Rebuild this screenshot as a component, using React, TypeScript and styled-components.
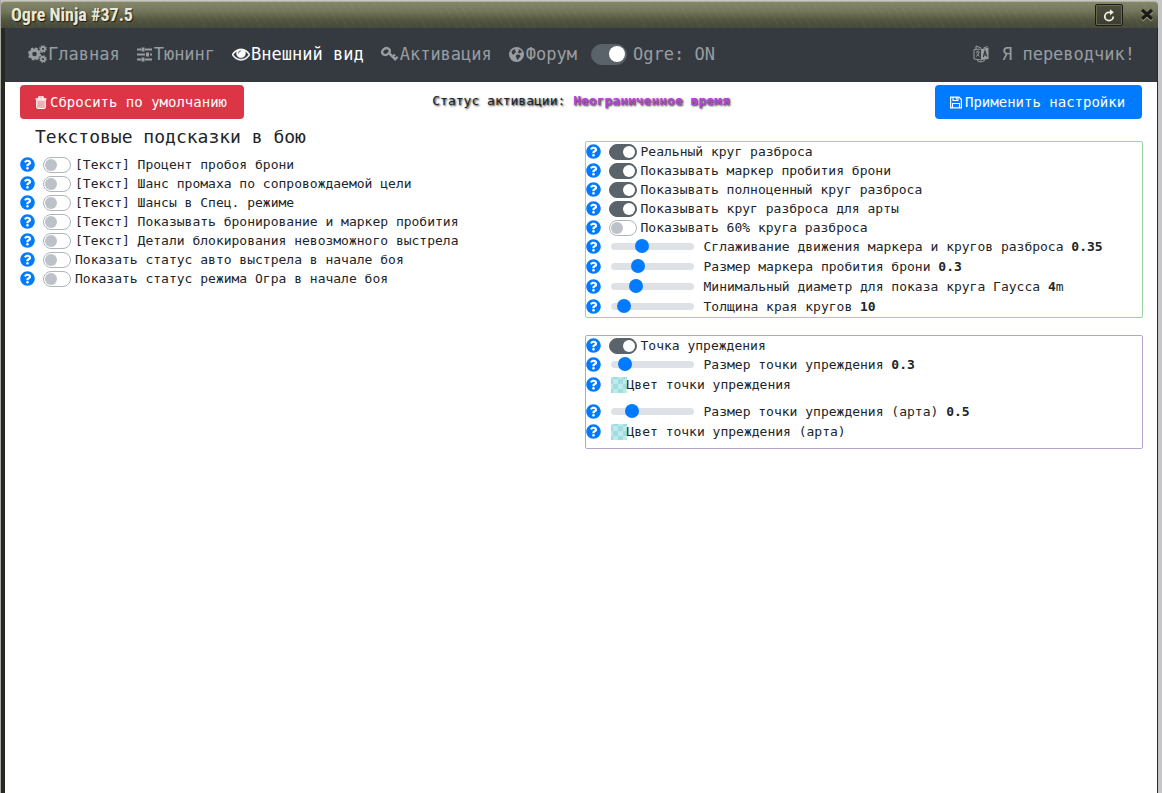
import React, { useState } from "react";
import styled, { createGlobalStyle } from "styled-components";
import { FaQuestionCircle } from "react-icons/fa";

const Global = createGlobalStyle`
  * { box-sizing: border-box; }
  body {
    margin: 0;
    background: #c6c6c8;
    color: #212529;
    font: 13px/19px "DejaVu Sans Mono", monospace;
  }
`;

const Frame = styled.div`
  display: flex;
  flex-direction: column;
  min-height: 100vh;
  margin-right: 4px;
  padding-top: 1px;
  border-left: 1px solid #a9aaa6;
`;

const TitleBar = styled.header`
  display: flex;
  align-items: center;
  gap: 16px;
  height: 27px;
  padding: 0 3px 0 10px;
  border-top: 1px solid #b0b294;
  border-radius: 4px 4px 0 0;
  background:
    repeating-linear-gradient(63deg, rgba(255, 255, 220, 0.03) 0 1px, transparent 1px 7px),
    linear-gradient(#84876a, #73765a 35%, #53553f 70%, #46483a);
`;

const Title = styled.h1`
  flex: 1;
  margin: 0;
  color: #e9e9d6;
  font: bold 18px/26px "Liberation Sans Narrow", "Roboto Condensed", sans-serif;
  text-shadow: 1px 1px 1px #1c1d14;
`;

const TitleButton = styled.button<{ $boxed?: boolean }>`
  display: grid;
  place-items: center;
  width: ${(p) => (p.$boxed ? 28 : 16)}px;
  height: 22px;
  padding: 0;
  border: ${(p) => (p.$boxed ? "1px solid #1b1c14" : "0")};
  border-radius: 2px;
  background: ${(p) => (p.$boxed ? "linear-gradient(#4c4e3c, #3b3c30)" : "none")};
  box-shadow: ${(p) => (p.$boxed ? "inset 0 0 0 1px #66684f" : "none")};
  color: #f1f1e2;
`;

const Body = styled.div`
  flex: 1;
  border-left: 4px solid #26291f;
  border-right: 1px solid #2a2b27;
  background: #fff;
`;

const NavBar = styled.nav`
  display: flex;
  align-items: center;
  gap: 17px;
  height: 54px;
  padding: 0 22px 2px 23px;
  background: #343a40;
  font-size: 17px;
  line-height: 24px;
`;

const NavLink = styled.a<{ $active?: boolean; $wide?: boolean }>`
  display: flex;
  align-items: center;
  gap: ${(p) => (p.$wide ? 12 : 1)}px;
  margin-left: ${(p) => (p.$wide ? "auto" : "0")};
  color: ${(p) => (p.$active ? "#fff" : "#999da0")};
  text-decoration: none;
  white-space: nowrap;
`;

const NavToggle = styled.label`
  display: flex;
  align-items: center;
  gap: 6px;
  margin-left: -3px;
  color: #999da0;
`;

const Switch = styled.input.attrs({ type: "checkbox", role: "switch" })<{ $large?: boolean }>`
  appearance: none;
  flex: none;
  display: flex;
  align-items: center;
  width: ${(p) => (p.$large ? 36 : 28)}px;
  height: ${(p) => (p.$large ? 21 : 16)}px;
  margin: 0;
  padding: 0 1px;
  border: 1px solid #adb5bd;
  border-radius: 12px;
  background: #fff;

  &::before {
    content: "";
    width: ${(p) => (p.$large ? 16 : 12)}px;
    height: ${(p) => (p.$large ? 16 : 12)}px;
    border-radius: 50%;
    background: #bcc2c8;
  }

  &:checked {
    justify-content: flex-end;
    border-color: #596369;
    background: #596369;
  }

  &:checked::before {
    background: #fff;
  }
`;

const Toolbar = styled.div`
  display: grid;
  grid-template-columns: 1fr auto 1fr;
  align-items: center;
  padding: 3px 15px 0;
`;

const ActionButton = styled.button<{ $tone: "danger" | "primary" }>`
  display: flex;
  align-items: center;
  justify-self: ${(p) => (p.$tone === "danger" ? "start" : "end")};
  gap: 3px;
  width: ${(p) => (p.$tone === "danger" ? 224 : 207)}px;
  height: 34px;
  padding: 0 0 0 15px;
  border: 0;
  border-radius: 4px;
  background: ${(p) => (p.$tone === "danger" ? "#dc3545" : "#007bff")};
  color: #fff;
  font: 14px/20px "DejaVu Sans Mono", monospace;
  white-space: nowrap;
`;

const Status = styled.p`
  margin: 0;
  padding-bottom: 4px;
  text-shadow: 1px 1px 2px #222;

  strong {
    color: #b840dc;
  }
`;

const Columns = styled.main`
  display: grid;
  grid-template-columns: 1fr 1fr;
  padding: 4px 14px 0 15px;
`;

const Heading = styled.h2`
  margin: 0 0 4px 15px;
  font-size: 18px;
  font-weight: 400;
  line-height: 28px;
`;

const Side = styled.div`
  display: flex;
  flex-direction: column;
  gap: 17px;
  padding: 18px 0 0 3px;
`;

const Panel = styled.section<{ $tone: "green" | "violet" }>`
  padding-bottom: ${(p) => (p.$tone === "green" ? 0 : 6)}px;
  border: 1px solid ${(p) => (p.$tone === "green" ? "#9ad69c" : "#b5a2cd")};
  border-radius: 2px;
`;

const Row = styled.div<{ $tall?: boolean; $spaced?: boolean }>`
  display: flex;
  align-items: center;
  height: ${(p) => (p.$tall ? 20 : 19)}px;
  margin-top: ${(p) => (p.$spaced ? 7 : 0)}px;
  padding-bottom: ${(p) => (p.$tall ? 1 : 0)}px;
  white-space: nowrap;
`;

const Hint = styled.button`
  display: flex;
  flex: none;
  width: 15px;
  margin-right: 8px;
  padding: 0;
  border: 0;
  background: none;
  color: #007bff;
`;

const Option = styled.label`
  display: flex;
  align-items: center;
  gap: 4px;
`;

const SliderOption = styled(Option)`
  gap: 10px;
  margin-left: 2px;
`;

const ColorOption = styled(Option)`
  gap: 0;
  margin-left: 2px;
`;

const Range = styled.input.attrs({ type: "range" })`
  appearance: none;
  width: 83px;
  height: 14px;
  margin: 0;
  background: none;

  &::-webkit-slider-runnable-track {
    height: 7px;
    border-radius: 4px;
    background: #dee2e6;
  }

  &::-webkit-slider-thumb {
    appearance: none;
    width: 14px;
    height: 14px;
    margin-top: -4px;
    border-radius: 50%;
    background: #007bff;
  }
`;

const Swatch = styled.button`
  width: 16px;
  height: 16px;
  padding: 0;
  border: 0;
  background: repeating-conic-gradient(#a3dcdf 0 25%, #bbebed 0 50%) 2px 2px / 10px 10px;
`;

function Icon({ w, h = w, box, children }: { w: number; h?: number; box: string; children: React.ReactNode }) {
  return (
    <svg width={w} height={h} viewBox={box} fill="none" stroke="currentColor" aria-hidden="true">
      {children}
    </svg>
  );
}

const GearsIcon = () => (
  <Icon w={19} h={18} box="0 0 19 18">
    <circle cx="6.500" cy="9" r="3.900" strokeWidth="3.200" />
    <circle cx="6.500" cy="9" r="5.700" strokeWidth="1.700" strokeDasharray="2.500 1.977" />
    <circle cx="15" cy="4" r="2" strokeWidth="1.800" />
    <circle cx="15" cy="4" r="3.200" strokeWidth="1.300" strokeDasharray="1.400 1.113" />
    <circle cx="15" cy="14" r="2" strokeWidth="1.800" />
    <circle cx="15" cy="14" r="3.200" strokeWidth="1.300" strokeDasharray="1.400 1.113" />
  </Icon>
);

const SlidersIcon = () => (
  <Icon w={16} h={15} box="0 0 16 15">
    <path d="M0 2.500h4M8 2.500h7M0 7.500h8M13 7.500h2M0 12.500h4M8 12.500h7" strokeWidth="1.800" />
    <path d="M6 .5v4M10.500 5.500v4M6 10.500v4" strokeWidth="3" />
  </Icon>
);

const EyeIcon = () => (
  <Icon w={18} box="0 0 1792 1792">
    <path
      fill="currentColor"
      strokeWidth="40"
      d="M1664 960q-152-236-381-353 61 104 61 225 0 185-131.500 316.500t-316.500 131.500-316.500-131.500-131.500-316.500q0-121 61-225-229 117-381 353 133 205 333.500 326.500t434.500 121.500 434.500-121.500 333.500-326.500zm-720-384q0-20-14-34t-34-14q-125 0-214.500 89.500t-89.500 214.500q0 20 14 34t34 14 34-14 14-34q0-86 61-147t147-61q20 0 34-14t14-34zm848 384q0 34-20 69-140 230-376.500 368.500t-499.500 138.500-499.500-139-376.500-368q-20-35-20-69t20-69q140-229 376.500-368t499.500-139 499.500 139 376.500 368q20 35 20 69z"
    />
  </Icon>
);

const KeyIcon = () => (
  <Icon w={18} h={16} box="0 0 18 16">
    <ellipse cx="5" cy="5.500" rx="4" ry="3.200" transform="rotate(-30 5 5.500)" strokeWidth="2.500" />
    <path d="M8 7.200L15 14" strokeWidth="2.500" />
    <path d="M11.500 11l2.500-2.500M14 13.500l2.700-2.700" strokeWidth="2.200" />
  </Icon>
);

const GlobeIcon = () => (
  <Icon w={16} h={15} box="0 0 16 15">
    <circle cx="7.500" cy="7.500" r="7.500" fill="currentColor" stroke="none" />
    <path
      fill="#343a40"
      stroke="none"
      d="M2.500 4.500L5 2.300l1.500.5-.5 1.200 1.200 1L5.500 6.200 5 7.700 3.200 7zM9.500 2l2.500 1.500 1 2.500-1.300-.6-1.400 1-1.600-.9 1.100-1.600zM8 7.500l2.700.3.9 1.400-2 2.500L8.200 13 7.400 10.500 6.500 9z"
    />
  </Icon>
);

const TranslateIcon = () => (
  <Icon w={17} h={18} box="0 0 17 18">
    <path d="M8.500 4L15.500 2.500V14L8.500 15z" fill="currentColor" stroke="none" />
    <path d="M1 4.500L8.500 4V15L1 14zM3 4V1l5 2M14.500 1.500l-4 1.500M4 15.500q4 3 8-.5" />
    <path d="M2.800 7h4M4.800 5.500V7M6 7.500q-.8 3-3 4M3.500 8.500l3 3" strokeWidth=".9" />
    <path d="M10.300 12l1.700-6 1.800 5.500M10.800 10h2.500" stroke="#343a40" strokeWidth="1.200" />
  </Icon>
);

const TrashIcon = () => (
  <Icon w={12} h={13} box="0 0 12 13">
    <path d="M.5 3h11M4 2.500V1h4v1.500" strokeWidth="1.400" />
    <path d="M1.700 4v7.500q0 1 1 1h6.600q1 0 1-1V4z" fill="currentColor" fillOpacity=".6" />
  </Icon>
);

const SaveIcon = () => (
  <Icon w={12} h={13} box="0 0 12 13">
    <path d="M.6 1.100h8.400l2.400 2.400v8.400H.6z" strokeWidth="1.200" />
    <path d="M3 1v3.500h5V1M2.500 12V7.500h7V12" strokeWidth="1.100" />
    <path d="M6.500 1.500v2" strokeWidth="1.300" />
  </Icon>
);

const ReloadIcon = () => (
  <Icon w={12} h={13} box="0 0 12 13">
    <path d="M10.200 7.500A4.200 4.200 0 1 1 6 3.300H7.500" strokeWidth="1.800" />
    <path d="M7 0.300L10.800 3.300 7 6.300z" fill="currentColor" stroke="none" />
  </Icon>
);

const CloseIcon = () => (
  <Icon w={14} box="0 0 14 14">
    <path d="M2 3l10 9M12 3L2 12" stroke="#a5a78f" strokeWidth="3.500" />
    <path d="M2 2l10 9M12 2L2 11" stroke="#1b1c17" strokeWidth="3.200" />
  </Icon>
);

const HelpButton = () => (
  <Hint type="button" aria-label="?">
    <FaQuestionCircle size={15} />
  </Hint>
);

function SwitchRow({ text, on }: { text: string; on?: boolean }) {
  return (
    <Row>
      <HelpButton />
      <Option>
        <Switch defaultChecked={on} />
        {text}
      </Option>
    </Row>
  );
}

type SliderProps = { text: string; value: number; min?: number; max: number; step?: number; unit?: string; spaced?: boolean };

function SliderRow({ text, value: initial, min = 0, max, step = 0.01, unit = "", spaced }: SliderProps) {
  const [value, setValue] = useState(initial);
  return (
    <Row $tall $spaced={spaced}>
      <HelpButton />
      <SliderOption>
        <Range min={min} max={max} step={step} value={value} onChange={(e) => setValue(Number(e.target.value))} />
        <span>
          {text} <b>{value}</b>
          {unit}
        </span>
      </SliderOption>
    </Row>
  );
}

function ColorRow({ text }: { text: string }) {
  return (
    <Row $tall>
      <HelpButton />
      <ColorOption>
        <Swatch type="button" />
        {text}
      </ColorOption>
    </Row>
  );
}

const hints = [
  "[Текст] Процент пробоя брони",
  "[Текст] Шанс промаха по сопровождаемой цели",
  "[Текст] Шансы в Спец. режиме",
  "[Текст] Показывать бронирование и маркер пробития",
  "[Текст] Детали блокирования невозможного выстрела",
  "Показать статус авто выстрела в начале боя",
  "Показать статус режима Огра в начале боя",
];

export default function App() {
  return (
    <>
      <Global />
      <Frame>
        <TitleBar>
          <Title>Ogre Ninja #37.5</Title>
          <TitleButton type="button" $boxed aria-label="Reload"><ReloadIcon /></TitleButton>
          <TitleButton type="button" aria-label="Close"><CloseIcon /></TitleButton>
        </TitleBar>
        <Body>
          <NavBar>
            <NavLink href="#main"><GearsIcon />Главная</NavLink>
            <NavLink href="#tuning"><SlidersIcon />Тюнинг</NavLink>
            <NavLink href="#view" $active><EyeIcon />Внешний вид</NavLink>
            <NavLink href="#activation"><KeyIcon />Активация</NavLink>
            <NavLink href="#forum"><GlobeIcon />Форум</NavLink>
            <NavToggle><Switch $large defaultChecked />Ogre: ON</NavToggle>
            <NavLink href="#translate" $wide><TranslateIcon />Я переводчик!</NavLink>
          </NavBar>
          <Toolbar>
            <ActionButton type="button" $tone="danger"><TrashIcon />Сбросить по умолчанию</ActionButton>
            <Status>Статус активации: <strong>Неограниченное время</strong></Status>
            <ActionButton type="button" $tone="primary"><SaveIcon />Применить настройки</ActionButton>
          </Toolbar>
          <Columns>
            <section>
              <Heading>Текстовые подсказки в бою</Heading>
              {hints.map((text) => <SwitchRow key={text} text={text} />)}
            </section>
            <Side>
              <Panel $tone="green">
                <SwitchRow text="Реальный круг разброса" on />
                <SwitchRow text="Показывать маркер пробития брони" on />
                <SwitchRow text="Показывать полноценный круг разброса" on />
                <SwitchRow text="Показывать круг разброса для арты" on />
                <SwitchRow text="Показывать 60% круга разброса" />
                <SliderRow text="Сглаживание движения маркера и кругов разброса" value={0.35} max={1} />
                <SliderRow text="Размер маркера пробития брони" value={0.3} max={1} />
                <SliderRow text="Минимальный диаметр для показа круга Гаусса" value={4} max={15} step={1} unit="m" />
                <SliderRow text="Толщина края кругов" value={10} max={100} step={1} />
              </Panel>
              <Panel $tone="violet">
                <SwitchRow text="Точка упреждения" on />
                <SliderRow text="Размер точки упреждения" value={0.3} min={0.1} max={2} step={0.1} />
                <ColorRow text="Цвет точки упреждения" />
                <SliderRow text="Размер точки упреждения (арта)" value={0.5} min={0.1} max={2} step={0.1} spaced />
                <ColorRow text="Цвет точки упреждения (арта)" />
              </Panel>
            </Side>
          </Columns>
        </Body>
      </Frame>
    </>
  );
}
